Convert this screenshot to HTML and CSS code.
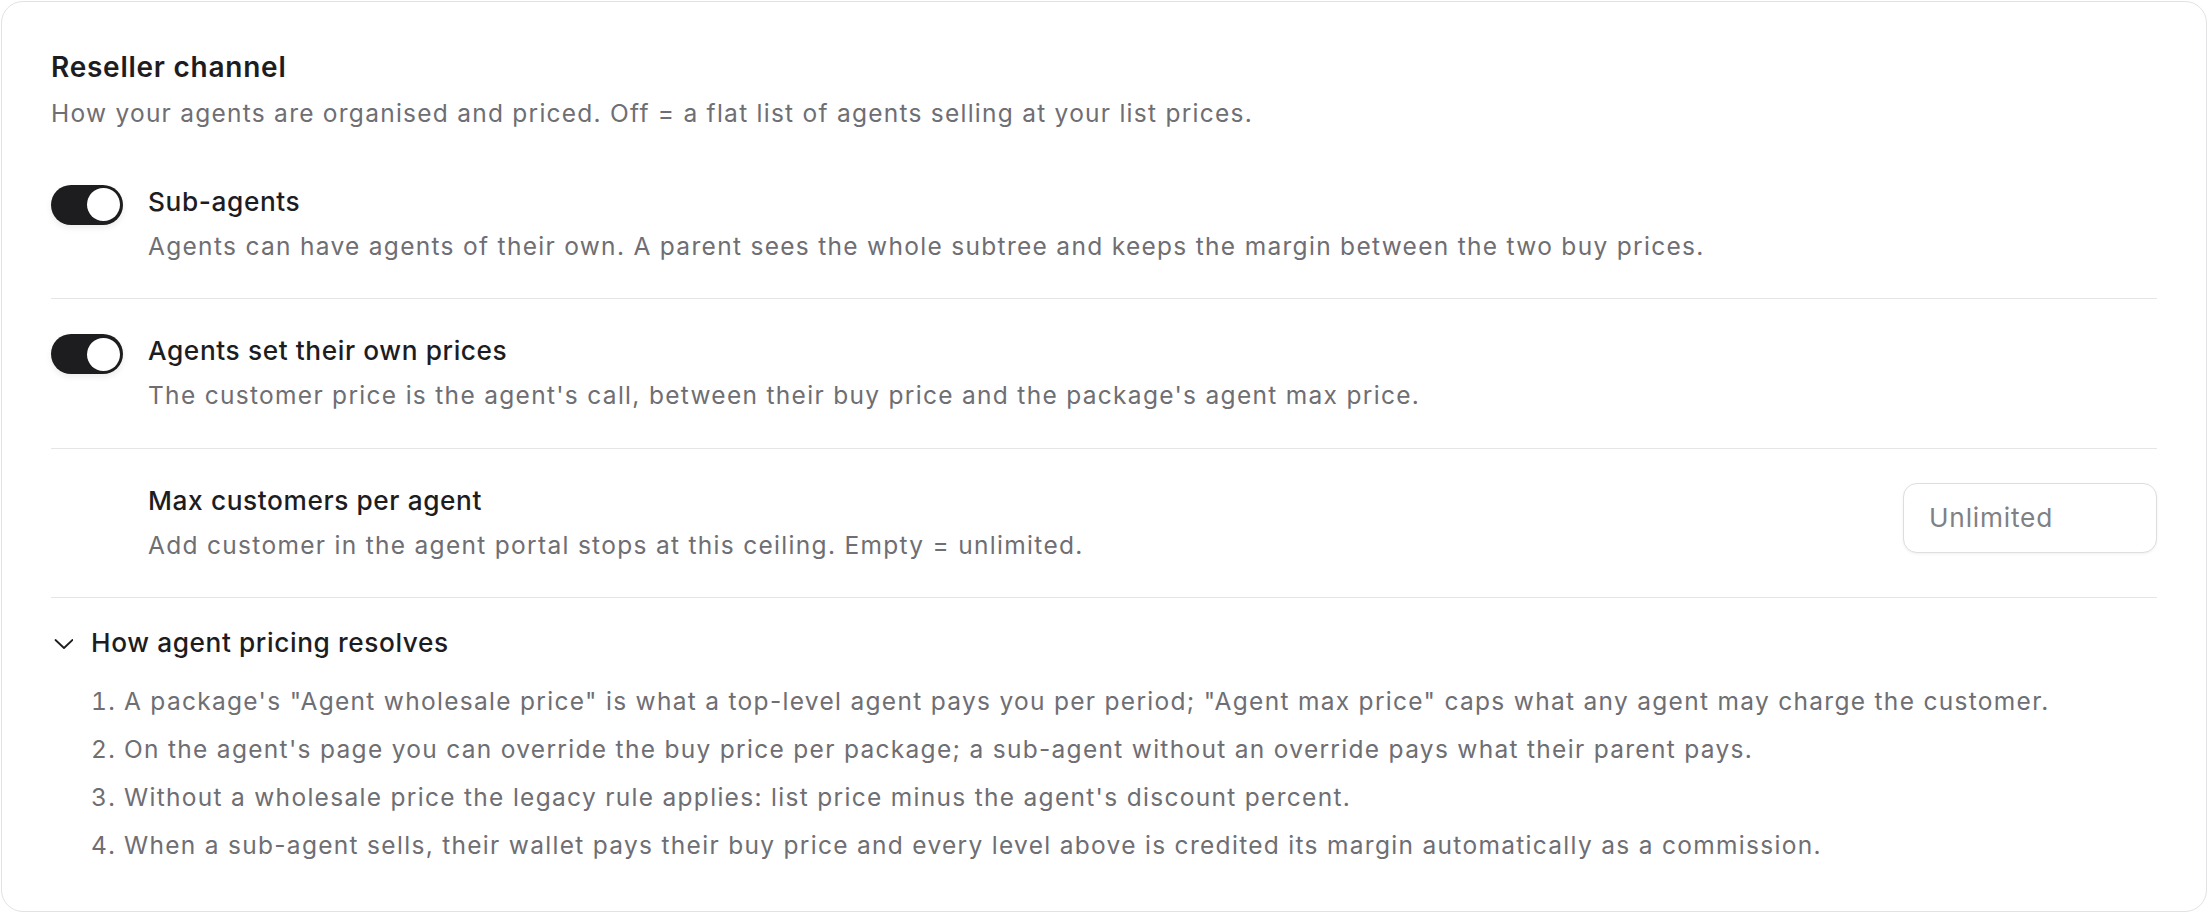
FILE: index.html
```html
<!DOCTYPE html>
<html lang="en">
<head>
    <meta charset="UTF-8">
    <meta name="viewport" content="width=device-width, initial-scale=1.0">
    <link rel="stylesheet" href="styles.css">
    <title>Reseller channel</title>
</head>
<body>
    <section class="card">
        <div class="card-header">
            <h2 class="card-title">Reseller channel</h2>
            <p class="card-subtitle">How your agents are organised and priced. Off = a flat list of agents selling at your list prices.</p>
        </div>

        <div class="settings">
            <div class="setting">
                <span class="switch is-on" role="switch" aria-checked="true"><span class="switch-knob"></span></span>
                <div class="setting-text">
                    <div class="setting-label">Sub-agents</div>
                    <div class="setting-desc">Agents can have agents of their own. A parent sees the whole subtree and keeps the margin between the two buy prices.</div>
                </div>
            </div>

            <div class="setting">
                <span class="switch is-on" role="switch" aria-checked="true"><span class="switch-knob"></span></span>
                <div class="setting-text">
                    <div class="setting-label">Agents set their own prices</div>
                    <div class="setting-desc">The customer price is the agent's call, between their buy price and the package's agent max price.</div>
                </div>
            </div>

            <div class="setting setting-nested">
                <div class="setting-text">
                    <div class="setting-label">Max customers per agent</div>
                    <div class="setting-desc">Add customer in the agent portal stops at this ceiling. Empty = unlimited.</div>
                </div>
                <input class="text-input" type="text" placeholder="Unlimited">
            </div>
        </div>

        <details class="explainer" open>
            <summary class="explainer-toggle">
                <svg class="chevron" width="22" height="12" viewBox="0 0 22 12" aria-hidden="true">
                    <polyline points="4.5,2 13,10 21.5,2" fill="none" stroke="currentColor" stroke-width="1.8" stroke-linecap="round" stroke-linejoin="round"/>
                </svg>
                How agent pricing resolves
            </summary>
            <ol class="explainer-list">
                <li>A package's "Agent wholesale price" is what a top-level agent pays you per period; "Agent max price" caps what any agent may charge the customer.</li>
                <li>On the agent's page you can override the buy price per package; a sub-agent without an override pays what their parent pays.</li>
                <li>Without a wholesale price the legacy rule applies: list price minus the agent's discount percent.</li>
                <li>When a sub-agent sells, their wallet pays their buy price and every level above is credited its margin automatically as a commission.</li>
            </ol>
        </details>
    </section>
</body>
</html>
```

FILE: styles.css
```css
body {
    margin: 0;
    padding: 1px;
    font-family: 'Inter', 'Noto Sans', sans-serif;
    color: #1d1d1f;
    background: #fff;
}

.card {
    border: 1px solid #e2e2e4;
    border-radius: 22px;
    padding: 46px 49px 42px;
    background: #fff;
}

.card-title {
    margin: 0;
    font-size: 28px;
    line-height: 39px;
    font-weight: 600;
    letter-spacing: 0.75px;
}

.card-subtitle {
    margin: 8px 0 0;
    font-size: 24.5px;
    line-height: 36.75px;
    letter-spacing: 1.25px;
    color: #6e6e73;
}

.settings {
    margin-top: 18px;
}

.setting {
    display: flex;
    align-items: flex-start;
    gap: 25px;
    padding: 34px 0;
    border-bottom: 1px solid #e5e5e7;
}

.setting-nested {
    padding-left: 97px;
}

.setting-text {
    flex: 1;
}

.setting-label {
    font-size: 26.25px;
    line-height: 36.75px;
    font-weight: 500;
    letter-spacing: 0.6px;
}

.setting-desc {
    margin-top: 7px;
    font-size: 24.5px;
    line-height: 36.75px;
    letter-spacing: 1.3px;
    color: #6e6e73;
}

/* toggle */
.switch {
    flex: none;
    display: flex;
    align-items: center;
    justify-content: flex-start;
    box-sizing: border-box;
    width: 72px;
    height: 40px;
    margin-top: 1px;
    padding: 3.5px;
    border-radius: 20px;
    background: #d1d1d6;
    box-shadow: 0 3px 6px rgba(0, 0, 0, 0.08);
}

.switch.is-on {
    justify-content: flex-end;
    background: #1d1d1f;
}

.switch-knob {
    width: 33px;
    height: 33px;
    border-radius: 50%;
    background: #fff;
}

.text-input {
    flex: none;
    box-sizing: border-box;
    width: 254px;
    height: 70px;
    padding: 0 25px;
    border: 1px solid #dedee0;
    border-radius: 14px;
    box-shadow: 0 1px 3px rgba(0, 0, 0, 0.06);
    font-family: inherit;
    font-size: 26.25px;
    letter-spacing: 0.8px;
    color: #1d1d1f;
    background: #fff;
    outline: none;
}

.text-input::placeholder {
    color: #808085;
}

/* pricing explainer */
.explainer {
    padding-top: 27px;
}

.explainer-toggle {
    display: flex;
    align-items: center;
    gap: 18px;
    list-style: none;
    cursor: pointer;
    font-size: 26.25px;
    line-height: 36.75px;
    font-weight: 500;
    letter-spacing: 0.6px;
}

.explainer-toggle::-webkit-details-marker {
    display: none;
}

.chevron {
    display: block;
}

.explainer-list {
    margin: 15px 0 0;
    padding: 0 0 0 40px;
    list-style-position: inside;
    color: #6e6e73;
    font-size: 24.5px;
    line-height: 48px;
    letter-spacing: 1.3px;
}
```
